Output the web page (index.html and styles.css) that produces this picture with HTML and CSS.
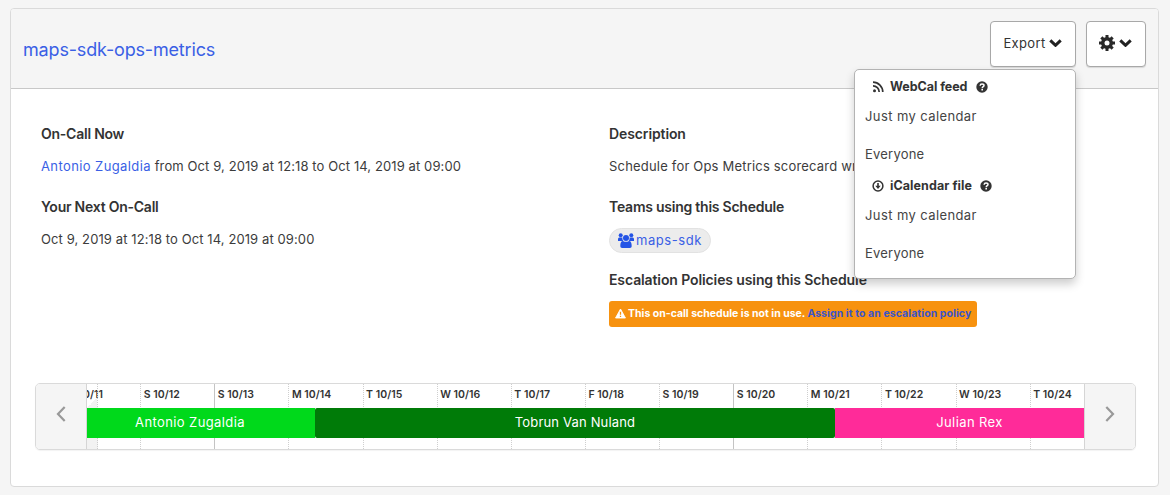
FILE: index.html
```html
<!DOCTYPE html>
<html lang="en">
<head>
<meta charset="utf-8">
<title>maps-sdk-ops-metrics</title>
<link rel="stylesheet" href="styles.css">
</head>
<body>
<svg width="0" height="0" class="defs" aria-hidden="true">
  <symbol id="chevron" viewBox="0 0 13 8"><path d="M1.300 1.300 6.500 6.300l5.200-5" fill="none" stroke="currentColor" stroke-width="3"/></symbol>
  <symbol id="help" viewBox="0 0 12 12"><circle cx="6" cy="6" r="5.700" fill="currentColor"/><path d="M4.100 4.700C4.200 3.500 5 2.900 6 2.900c1.200 0 2 .7 2 1.600C8 5.700 6.300 5.700 6.200 7.200" fill="none" stroke="#fff" stroke-width="1.500"/><path d="M5.400 8h1.600v1.500H5.400z" fill="#fff"/></symbol>
</svg>
<main class="panel">
  <header class="panel-header">
    <a class="title">maps-sdk-ops-metrics</a>
    <div class="actions">
      <div class="export">
        <button class="btn btn-export"><span>Export</span><svg class="chev"><use href="#chevron"/></svg></button>
        <div class="menu">
          <div class="menu-head">
            <svg class="menu-icon" viewBox="0 0 12 12"><circle cx="2.500" cy="9.700" r="1.500" fill="currentColor"/><path d="M1 4.800a6.200 6.200 0 0 1 6.200 6.200M1 1.200A9.800 9.800 0 0 1 10.800 11" fill="none" stroke="currentColor" stroke-width="1.700"/></svg>
            <span>WebCal feed</span><svg class="help"><use href="#help"/></svg>
          </div>
          <a class="menu-item wide">Just my calendar</a>
          <a class="menu-item">Everyone</a>
          <div class="menu-head ical">
            <svg class="menu-icon" viewBox="0 0 12 12"><circle cx="6" cy="6" r="4.900" fill="none" stroke="currentColor" stroke-width="1.500"/><path d="M5.200 3h1.600v2.700h1.900L6 8.900 3.300 5.700h1.900z" fill="currentColor"/></svg>
            <span>iCalendar file</span><svg class="help"><use href="#help"/></svg>
          </div>
          <a class="menu-item wide">Just my calendar</a>
          <a class="menu-item">Everyone</a>
        </div>
      </div>
      <button class="btn btn-gear"><svg class="gear" viewBox="0 0 16 16"><g fill="currentColor"><path d="M6.500 0h3v16h-3z"/><path d="M6.500 0h3v16h-3z" transform="rotate(45 8 8)"/><path d="M6.500 0h3v16h-3z" transform="rotate(90 8 8)"/><path d="M6.500 0h3v16h-3z" transform="rotate(135 8 8)"/><circle cx="8" cy="8" r="6"/></g><circle cx="8" cy="8" r="2.500" fill="#fff"/></svg><svg class="chev"><use href="#chevron"/></svg></button>
    </div>
  </header>
  <section class="details">
    <div class="col">
      <h2 class="tight">On-Call Now</h2>
      <p><a class="wide">Antonio Zugaldia</a> from Oct 9, 2019 at 12:18 to Oct 14, 2019 at 09:00</p>
      <h2 class="tight">Your Next On-Call</h2>
      <p>Oct 9, 2019 at 12:18 to Oct 14, 2019 at 09:00</p>
    </div>
    <div class="col">
      <h2>Description</h2>
      <p class="description">Schedule for Ops Metrics scorecard wr</p>
      <h2 class="tight">Teams using this Schedule</h2>
      <p><a class="team"><svg class="users" viewBox="0 0 16 15"><g fill="currentColor"><circle cx="2.700" cy="2.300" r="2"/><circle cx="13.300" cy="2.300" r="2"/><path d="M0 8V6.300Q0 4.600 1.200 4.600h3.200Q4 6.600 5.300 8zM16 8V6.300q0-1.700-1.200-1.700h-3.200q.4 2-.9 3.400z"/><circle cx="8" cy="4.900" r="3"/><path d="M2.300 13.200C2.300 10 3 8 5 8q3 1.700 6 0c2 0 2.700 2 2.700 5.200q0 1.800-1.800 1.800H4.100q-1.800 0-1.800-1.800z"/></g></svg><span>maps-sdk</span></a></p>
      <h2>Escalation Policies using this Schedule</h2>
      <div class="alert"><svg class="warn" viewBox="0 0 12 11"><path d="M6 .6 11.400 10.400H.6z" fill="#fff" stroke="#fff" stroke-linejoin="round"/><path d="M5.300 3.600h1.400v3.300H5.300zM5.300 7.900h1.400v1.400H5.300z" fill="#f7920f"/></svg><span>This on-call schedule is not in use.</span><a>Assign it to an escalation policy</a></div>
    </div>
  </section>
  <section class="timeline">
    <button class="nav prev"><svg viewBox="0 0 10 16"><path d="M8.700 1 2 8l6.700 7" fill="none" stroke="currentColor" stroke-width="2.200"/></svg></button>
    <div class="track">
      <div class="days">
        <span class="day">F 10/11</span><span class="day">S 10/12</span><span class="day week">S 10/13</span><span class="day">M 10/14</span><span class="day">T 10/15</span><span class="day">W 10/16</span><span class="day">T 10/17</span><span class="day">F 10/18</span><span class="day">S 10/19</span><span class="day week">S 10/20</span><span class="day">M 10/21</span><span class="day">T 10/22</span><span class="day">W 10/23</span><span class="day">T 10/24</span>
      </div>
      <div class="past"></div>
      <div class="shifts">
        <div class="shift first wide">Antonio Zugaldia</div><div class="shift second">Tobrun Van Nuland</div><div class="shift third wide">Julian Rex</div>
      </div>
    </div>
    <button class="nav next"><svg viewBox="0 0 10 16"><path d="m1.300 1 6.700 7-6.700 7" fill="none" stroke="currentColor" stroke-width="2.200"/></svg></button>
  </section>
</main>
</body>
</html>
```

FILE: styles.css
```css
* { box-sizing: border-box; }
body { margin: 0; padding: 8px 11px 8px 10px; height: 495px; overflow: hidden; background: #f5f5f5; color: #3c3c3c; font: 13px/18px Inter, "Liberation Sans", sans-serif; letter-spacing: .1px; }
.defs { position: absolute; }
a { color: #3a5fe5; }
button { font: inherit; color: #333; padding: 0; }
.panel { height: 479px; border: 1px solid #dadada; border-radius: 4px; background: #fff; }
.panel-header { display: flex; justify-content: space-between; align-items: flex-start; height: 80px; padding: 12px 12px 0; border-bottom: 1px solid #c8c8c8; border-radius: 3px 3px 0 0; background: #f5f5f5; }
.title { padding-top: 17px; font-size: 18px; line-height: 24px; letter-spacing: -.170px; }
.wide { letter-spacing: .4px; }
.actions { display: flex; gap: 10px; }
.export { position: relative; }
.btn { display: flex; align-items: center; justify-content: center; height: 46px; border: 1px solid #a8a8a8; border-radius: 4px; background: #fff; box-shadow: 0 1px 1px rgba(0,0,0,.12); }
.btn-export { width: 86px; gap: 3px; padding: 0 1px 2px 0; letter-spacing: .350px; }
.btn-gear { width: 60px; gap: 4px; padding: 0 1px 2px 0; color: #292929; }
.chev { width: 13px; height: 8px; color: #222; }
.gear { width: 16px; height: 16px; }
.menu { position: absolute; z-index: 2; top: 48px; right: 0; width: 222px; height: 210px; padding-top: 5px; border: 1px solid #b3b3b3; border-radius: 5px; background: #fff; box-shadow: 0 5px 10px rgba(0,0,0,.2); }
.menu-head { display: flex; align-items: center; height: 23px; padding-left: 17px; color: #333; font-size: 12.500px; font-weight: 700; letter-spacing: -.050px; }
.ical { letter-spacing: .070px; }
.menu-icon { width: 12px; height: 12px; margin-right: 6px; }
.help { width: 12px; height: 12px; margin-left: 8.500px; }
.menu-item { display: flex; align-items: center; height: 38px; padding: 0 0 2px 10px; color: #444; }
.menu-item:not(.wide) { letter-spacing: .220px; }
.details { display: grid; grid-template-columns: 568px 1fr; height: 294px; padding: 36px 30px 0; }
h2 { margin: 0; color: #333; font-size: 14px; line-height: 18px; font-weight: 600; letter-spacing: -.110px; }
h2.tight { letter-spacing: -.240px; }
p { height: 26px; margin: 11px 0 18px; line-height: 25px; white-space: nowrap; }
.description { letter-spacing: .190px; }
.team { display: inline-flex; align-items: center; gap: 2px; width: 102px; height: 25px; padding-left: 8px; border: 1px solid #e2e2e2; border-radius: 13px; background: #ececec; letter-spacing: .550px; vertical-align: top; margin-top: 1px; }
.users { width: 16px; height: 15px; color: #2454e6; }
.alert { display: flex; align-items: center; width: 368px; height: 26px; margin-top: 12px; padding: 0 0 1px 6px; border-radius: 3px; background: #f7920f; color: #fff; font-size: 10.500px; font-weight: 700; letter-spacing: 0; white-space: nowrap; }
.alert a { margin-left: 2px; color: #3b55c8; letter-spacing: .070px; }
.warn { flex: none; width: 11px; height: 11px; margin-right: 2px; }
.timeline { display: flex; width: 1101px; height: 67px; margin-left: 24px; border: 1px solid #dadada; border-radius: 5px; box-shadow: 0 1px 1px rgba(0,0,0,.05); }
.nav { display: flex; align-items: center; justify-content: center; width: 51px; padding-bottom: 5px; border: 0 solid #d5d5d5; background: #f5f5f5; color: #999; }
.nav svg { width: 10px; height: 16px; }
.prev { border-right-width: 1px; border-radius: 4px 0 0 4px; }
.next { border-left-width: 1px; border-radius: 0 4px 4px 0; }
.track { position: relative; width: 997px; overflow: hidden; }
.days { display: grid; grid-template-columns: repeat(14, 74.130px); height: 65px; margin-left: -21px; }
.day { padding: 2px 0 0 2.500px; border-left: 1px dotted #cfcfcf; color: #333; font-size: 10.500px; font-weight: 600; letter-spacing: .050px; }
.week { border-left: 1px solid #c4c4c4; }
.past { position: absolute; inset: 0 auto 0 0; width: 11px; border-right: 1px dotted #ccc; background: linear-gradient(135deg, transparent 32%, rgba(0,0,0,.05) 32%); }
.shifts { position: absolute; inset: 24px 0 auto; display: grid; grid-template-columns: 228px 520px 249px; height: 30px; }
.shift { display: flex; align-items: center; justify-content: center; padding-bottom: 2px; color: #fff; }
.first { padding-right: 22px; background: #00d91b; }
.second { background: #007b08; border-radius: 2px; letter-spacing: .170px; }
.third { padding-left: 20px; background: #ff2b99; }
```
